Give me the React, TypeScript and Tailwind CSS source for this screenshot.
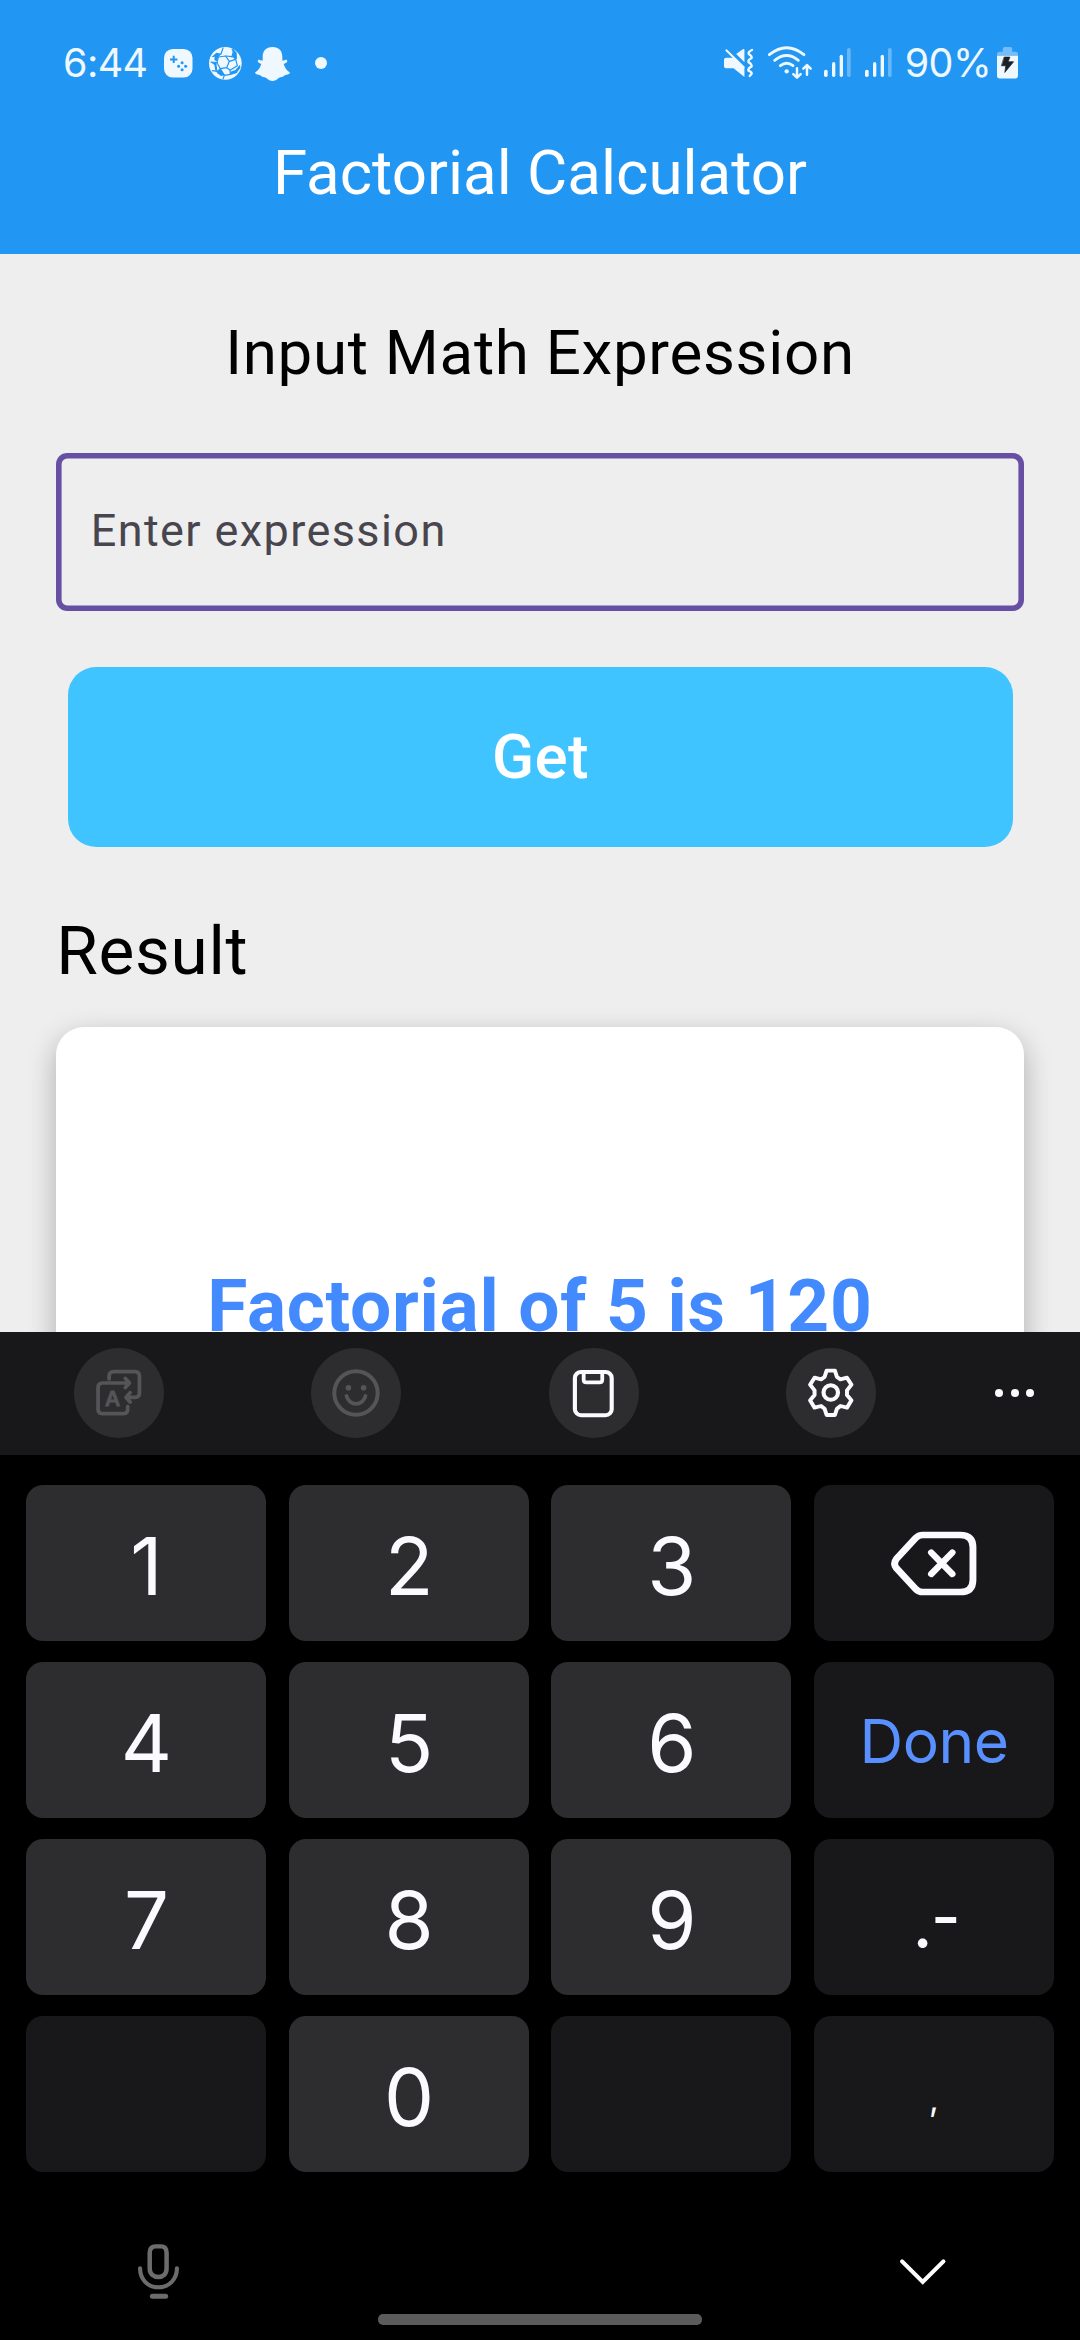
import React from "react";

type DrawingProps = {
  box: string;
  className: string;
  children: React.ReactNode;
};

function Drawing({ box, className, children }: DrawingProps) {
  return (
    <svg
      viewBox={box}
      preserveAspectRatio="none"
      className={"block shrink-0 overflow-visible " + className}
      fill="none"
      stroke="currentColor"
      strokeLinecap="round"
      strokeLinejoin="round"
    >
      {children}
    </svg>
  );
}

function Signal() {
  return (
    <Drawing box="366 54 81 87" className="h-[29px] w-[27px]">
      <g fill="currentColor" stroke="none">
        <rect x="366" y="119" width="11" height="22" rx="5" />
        <rect x="390" y="96" width="10" height="45" rx="5" />
        <rect x="413" y="74" width="10" height="67" rx="5" />
        <rect x="435" y="54" width="11" height="87" rx="5" opacity="0.35" />
      </g>
    </Drawing>
  );
}

function StatusBar() {
  return (
    <div className="flex h-[96px] items-start pt-[46px] pl-[63px] text-[#eff7ff]">
      <div className="mt-[-3px] w-[101px] font-['Inter',sans-serif] text-[39.500px] leading-[40px] tracking-[-0.600px]">
        6:44
      </div>
      <Drawing box="373 58 85 85" className="mt-[3px] h-[28.5px] w-[28.5px]">
        <rect x="373" y="58" width="85" height="85" rx="26" fill="currentColor" stroke="none" />
        <path d="M402 78v22M391 89h22" stroke="#2196f3" strokeWidth="6" strokeLinecap="butt" />
        <g fill="#2196f3" stroke="none">
          <circle cx="427" cy="99" r="4.500" />
          <circle cx="427" cy="120" r="4.500" />
          <circle cx="416.500" cy="109.500" r="4.500" />
          <circle cx="437.500" cy="109.500" r="4.500" />
        </g>
      </Drawing>
      <Drawing box="507 51 98 98" className="mt-[1px] ml-[16.500px] h-[32.700px] w-[32.700px]">
        <circle cx="556" cy="100" r="49" fill="currentColor" stroke="none" />
        <g stroke="#2196f3" strokeWidth="3.500" fill="none">
          <path d="M535 81L557 78L568 94L560 113L541 116L531 98Z" />
          <path d="M557 78L576 80M568 94L587 88M560 113L570 120M541 116L532 124M531 98L513 96M535 81L528 74" />
          <path d="M549 54L543 72M576 80L581 60M587 88L592 107L570 121L571 133L590 127M571 133L553 136L541 116M553 136L549 147M532 124L517 122" />
        </g>
        <g fill="#2196f3" stroke="none">
          <path d="M514 82L529 68L545 71L534 82L530 94L523 90L524 80Z" />
          <path d="M574 57L580 58L590 68L591 86L585 88L576 80L580 68Z" />
          <path d="M511 97L529 98L532 123L526 122L523 104Z" />
          <path d="M600 104L601 114L590 128L572 133L571 125L586 120Z" />
          <path d="M536 120L542 118L555 136L543 138L530 128Z" />
        </g>
      </Drawing>
      <Drawing box="645 51 105 101" className="mt-[1px] ml-[13px] h-[34px] w-[35px]">
        <path
          d="M697.500 51C718 51 727 64 727 80V91C731 93 738 87 741 90C744 95 737 99 731 101C734 113 741 122 750 127C749 133 737 134 733 136C729 142 723 139 716 143C710 148 704 152 697.500 152C691 152 685 148 679 143C672 139 666 142 662 136C658 134 646 133 645 127C654 122 661 113 664 101C658 99 651 95 654 90C657 87 664 93 668 91V80C668 64 677 51 697.500 51Z"
          fill="currentColor"
          stroke="none"
        />
      </Drawing>
      <div className="mt-[11px] ml-[25px] size-[12px] rounded-full bg-[#eff7ff]" />

      <Drawing box="72 57 88 84" className="mt-[3px] ml-[397px] h-[28px] w-[29px]">
        <g fill="currentColor" stroke="none">
          <path d="M80 83H101L134 113V141L101 115H80Q72 115 72 108V90Q72 83 80 83Z" />
          <path d="M109 72L129 58Q134 55 134 60V97Z" />
        </g>
        <path d="M79 61L132 112" strokeWidth="6" />
        <path
          d="M157 60Q144 66 147 72Q157 78 156 84Q144 90 146 96Q157 103 156 109Q144 115 146 122Q157 126 156 131L150 138"
          strokeWidth="7"
        />
      </Drawing>
      <Drawing box="204 48 132 98" className="ml-[15px] h-[32.700px] w-[44px]">
        <g strokeWidth="8.500">
          <path d="M208 74Q260 32 312 74" />
          <path d="M224 91Q260 62 295 91" />
          <path d="M241 107Q260 92 279 107" />
        </g>
        <circle cx="260" cy="124" r="6.500" fill="currentColor" stroke="none" />
        <path d="M291 115V142M280 132L291 143L302 132M321 134V106M310 116L321 105L332 116" strokeWidth="7.500" />
      </Drawing>
      <div className="mt-[2px] ml-[12px] flex gap-[14px]">
        <Signal />
        <Signal />
      </div>
      <div className="mt-[-3px] ml-[13px] w-[92px] font-['Inter',sans-serif] text-[39.500px] leading-[40px] tracking-[-0.600px]">
        90%
      </div>
      <Drawing box="885 52 62 94" className="mt-[1px] h-[31.500px] w-[21px]">
        <g fill="currentColor" stroke="none">
          <path d="M885 78V74Q885 66 893 66H902V58Q902 52 908 52H924Q930 52 930 58V66H939Q947 66 947 74V78Z" opacity="0.400" />
          <path d="M885 78H947V138Q947 146 939 146H893Q885 146 885 138Z" />
        </g>
        <path d="M907 82H923L918 96H934L908 128L911 108H899Z" fill="#1b1f26" stroke="#1b1f26" strokeWidth="2" />
      </Drawing>
    </div>
  );
}

function RoundButton({ children }: { children: React.ReactNode }) {
  return (
    <button className="flex size-[90px] shrink-0 items-center justify-center rounded-full bg-[#2d2d2f]">
      {children}
    </button>
  );
}

function Toolbar() {
  return (
    <div className="flex h-[123px] items-start bg-[#18181a] pt-[16px] pl-[74px] text-[#fbfaff]">
      <div className="flex gap-[147.300px]">
        <RoundButton>
          <Drawing box="279 150 132 138" className="h-[46px] w-[45.500px] text-[#555557]">
            <g strokeWidth="11">
              <path d="M317 177V169Q317 155 331 155H392Q405 155 405 169V219Q405 232 392 232H368M378 218L366 232L378 246" />
              <path d="M374 189H298Q285 189 285 203V267Q285 281 298 281H358Q371 281 371 267V260M364 175L376 189L364 203" />
            </g>
            <text
              x="327"
              y="257"
              textAnchor="middle"
              fill="currentColor"
              stroke="currentColor"
              strokeWidth="3"
              className="font-['Inter',sans-serif] text-[62px] font-medium"
            >
              A
            </text>
          </Drawing>
        </RoundButton>
        <RoundButton>
          <Drawing box="0 0 48 48" className="size-[48px] text-[#555557]">
            <circle cx="24" cy="24" r="21.700" strokeWidth="4" />
            <path d="M14.500 27C17.500 37.500 30.500 37.500 33.500 27" strokeWidth="3.800" />
            <g fill="currentColor" stroke="none">
              <circle cx="16.400" cy="18.800" r="2.800" />
              <circle cx="31.600" cy="18.800" r="2.800" />
            </g>
          </Drawing>
        </RoundButton>
        <RoundButton>
          <Drawing box="97 147 118 141" className="h-[47px] w-[40.600px]">
            <rect x="102.500" y="153" width="107" height="129.500" rx="18" strokeWidth="12" />
            <path d="M128 153V176Q128 184 136 184H174Q182 184 182 176V153" strokeWidth="11" />
          </Drawing>
        </RoundButton>
        <RoundButton>
          <Drawing box="777 147 131 143" className="h-[47.700px] w-[45.200px]">
            <path
              d="M831 152H855L861 171L871 178L890 173L903 194L890 211V225L903 241L890 263L871 258L861 266L855 285H831L825 266L815 258L796 263L783 241L796 225V211L783 194L796 173L815 178L825 171Z"
              strokeWidth="11.500"
            />
            <ellipse cx="843" cy="217.500" rx="21" ry="22" strokeWidth="12" />
          </Drawing>
        </RoundButton>
      </div>
      <div className="mt-[40.500px] ml-[119.500px] flex gap-[7.500px]">
        <span className="size-[8px] rounded-full bg-[#fbfaff]" />
        <span className="size-[8px] rounded-full bg-[#fbfaff]" />
        <span className="size-[8px] rounded-full bg-[#fbfaff]" />
      </div>
    </div>
  );
}

function Digit({ value }: { value: string }) {
  return (
    <button className="flex items-center justify-center rounded-[17px] bg-[#2d2d2f] pt-[8px] pl-[1px] text-[79.500px] leading-none text-[#fbfaff]">
      {value}
    </button>
  );
}

const sideKey = "flex items-center justify-center rounded-[17px] bg-[#18181a]";

function Keypad() {
  return (
    <div className="grid grid-cols-[repeat(4,240px)] grid-rows-[repeat(4,156px)] justify-between gap-y-[21px] px-[26px] pt-[30px] font-['Inter',sans-serif] text-[#fbfaff]">
      <Digit value="1" />
      <Digit value="2" />
      <Digit value="3" />
      <button className={sideKey}>
        <Drawing box="1020 633 248 195" className="h-[65px] w-[85.400px]">
          <path
            d="M1112 645H1221Q1258 645 1258 682V779Q1258 816 1221 816H1112Q1100 816 1091 806L1036 745Q1025 731 1036 716L1091 655Q1100 645 1112 645Z"
            strokeWidth="20"
          />
          <path d="M1137 698L1198 762M1198 698L1137 762" strokeWidth="19" />
        </Drawing>
      </button>
      <Digit value="4" />
      <Digit value="5" />
      <Digit value="6" />
      <button className={sideKey + " pt-[3px] text-[60.500px] leading-none tracking-[-0.500px] text-[#5990ff]"}>
        Done
      </button>
      <Digit value="7" />
      <Digit value="8" />
      <Digit value="9" />
      <button className={sideKey + " pt-[10px] pl-[5px] text-[72px] leading-none"}>
        <span>.</span>
        <span className="-mt-[11px] -ml-[2px] text-[64px] leading-none font-medium">-</span>
      </button>
      <div className={sideKey} />
      <Digit value="0" />
      <div className={sideKey} />
      <button className={sideKey + " pt-[9px] text-[34px] leading-none"}>,</button>
    </div>
  );
}

function Keyboard() {
  return (
    <div className="h-[1008px] shrink-0 bg-black">
      <Toolbar />
      <Keypad />
      <div className="flex h-[142px] items-start justify-between pt-[72px] pr-[135px] pl-[138px]">
        <Drawing box="401 793 119 164" className="h-[54.700px] w-[41px] text-[#6c6c6c]">
          <path
            d="M435 820Q435 800 452 800H468Q484 800 484 820V866C484 884 474 892 460 892S435 884 435 866Z"
            strokeWidth="13"
          />
          <path d="M407 866C407 900 430 923 460 923S514 900 514 866" strokeWidth="12" />
          <path d="M443 949.500H481" strokeWidth="15" />
        </Drawing>
        <Drawing box="1043 838 132 76" className="mt-[15px] h-[25.500px] w-[45.500px] text-white">
          <path d="M1049 845L1109 906L1169 845" strokeWidth="12" strokeLinejoin="miter" />
        </Drawing>
      </div>
      <div className="mx-auto h-[11px] w-[324px] rounded-[5px] bg-[#5b5b5b]" />
    </div>
  );
}

export default function App() {
  return (
    <div className="flex h-[2340px] w-[1080px] flex-col overflow-hidden bg-[#eeeeee] font-['Roboto',sans-serif]">
      <header className="h-[253.500px] shrink-0 bg-[#2196f3]">
        <StatusBar />
        <h1 className="mt-[37px] text-center text-[61.875px] leading-[80px] text-white">Factorial Calculator</h1>
      </header>
      <main className="flex h-[1078.500px] shrink-0 flex-col overflow-hidden px-[56.250px]">
        <h2 className="mt-[59px] text-center text-[61.875px] leading-[80px] tracking-[0.700px] text-black">
          Input Math Expression
        </h2>
        <div className="mt-[60.500px] flex h-[158px] shrink-0 items-center rounded-[11.250px] pb-[2px] pl-[34.500px] text-[45px] tracking-[1.400px] text-[#49454f] shadow-[inset_0_0_0_5.600px_#6750a4]">
          Enter expression
        </div>
        <button className="mx-[11.250px] mt-[56px] h-[180px] shrink-0 rounded-[28px] bg-[#40c4ff] pt-[2px] pl-[1px] text-[61.875px] leading-none font-medium tracking-[0.300px] text-white">
          Get
        </button>
        <h3 className="mt-[64px] text-[67.500px] leading-[80px] tracking-[0.700px] text-black">Result</h3>
        <section className="mt-[36px] h-[560px] shrink-0 rounded-[28px] bg-white pt-[239px] text-center text-[73.125px] leading-[80px] font-bold tracking-[0.700px] text-[#448aff] shadow-[0_10px_28px_rgba(0,0,0,0.28)]">
          Factorial of 5 is 120
        </section>
      </main>
      <Keyboard />
    </div>
  );
}
